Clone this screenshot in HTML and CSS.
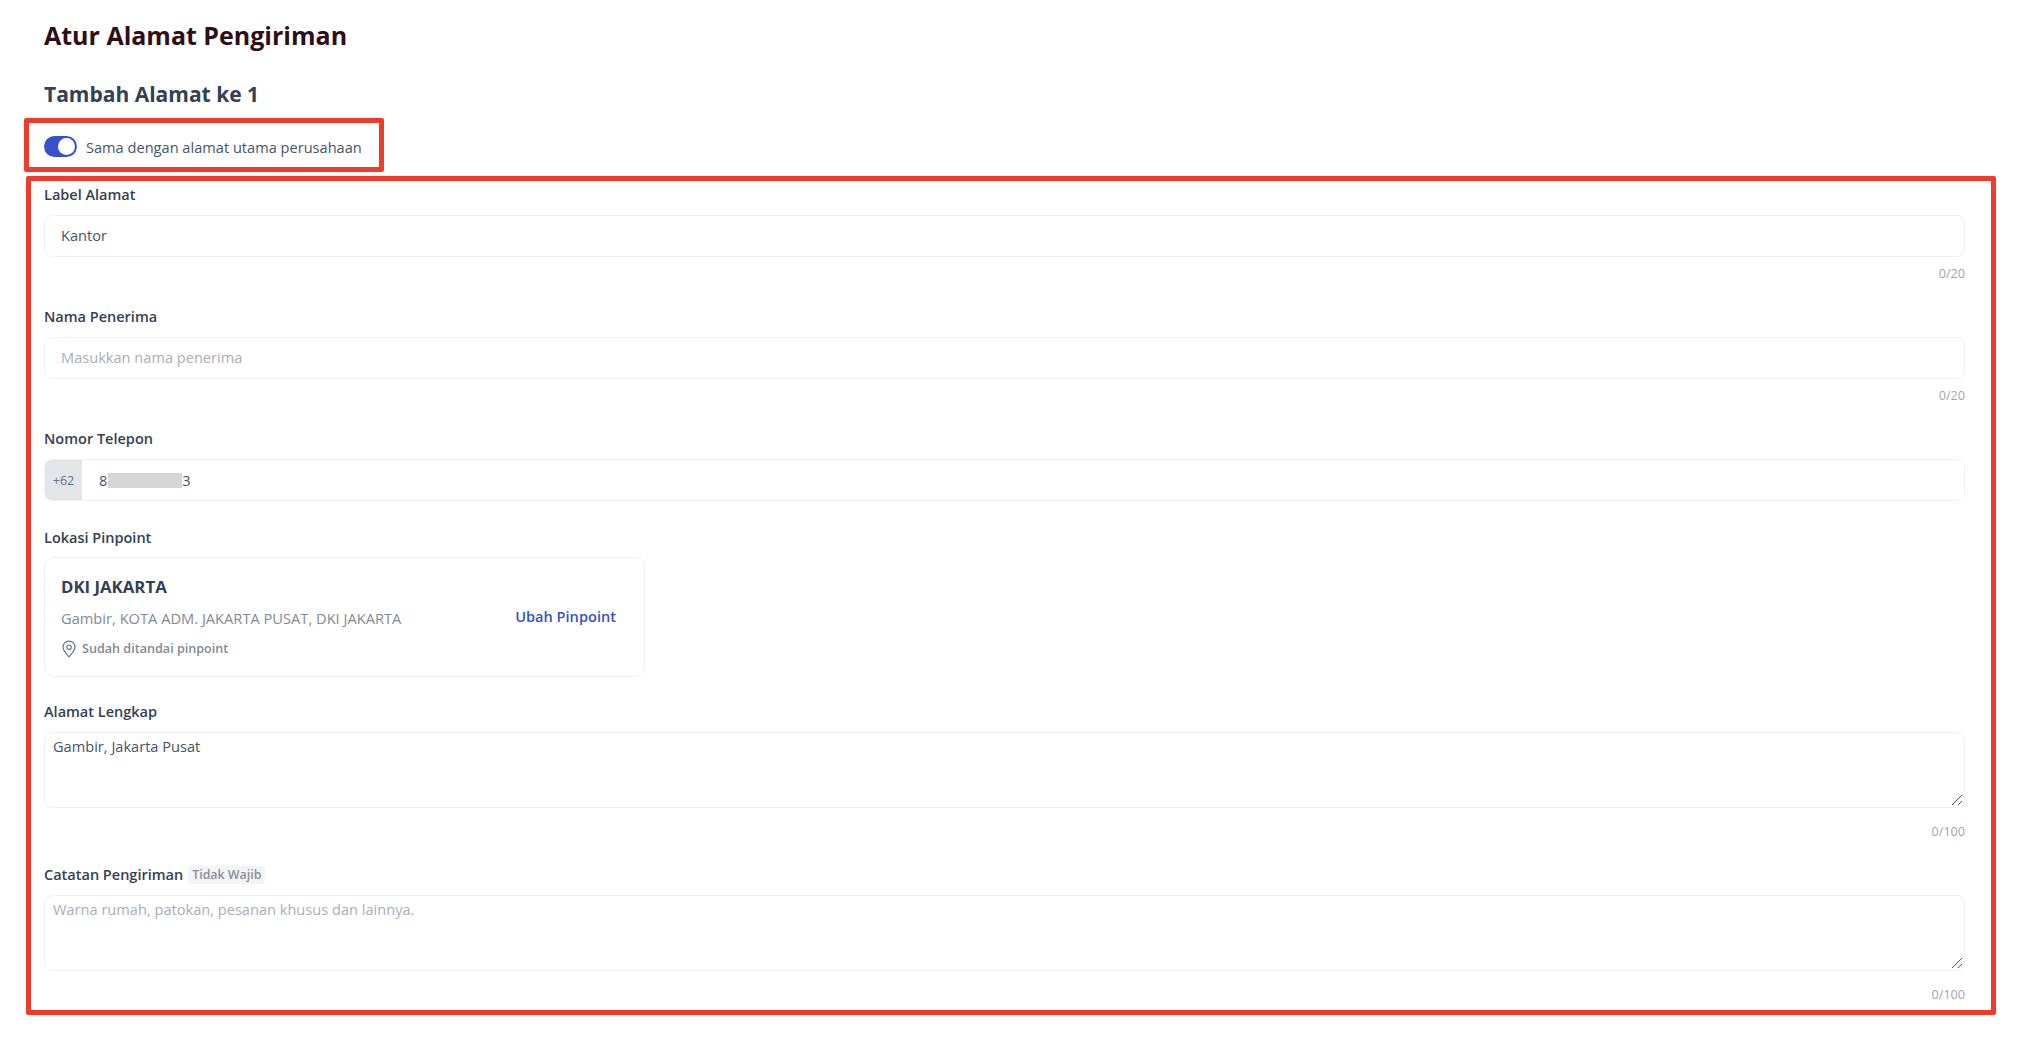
FILE: index.html
```html
<!DOCTYPE html>
<html lang="id">
<head>
<meta charset="utf-8">
<title>Atur Alamat Pengiriman</title>
<link rel="stylesheet" href="styles.css">
</head>
<body>
<main class="page">
  <h1 class="title">Atur Alamat Pengiriman</h1>
  <h2 class="subtitle">Tambah Alamat ke 1</h2>
  <section class="mark mark-toggle">
    <span class="toggle"><span class="knob"></span></span>
    <span class="toggle-text">Sama dengan alamat utama perusahaan</span>
  </section>
  <section class="mark mark-form">
    <div class="field">
      <div class="label">Label Alamat</div>
      <div class="input">Kantor</div>
      <div class="count">0/20</div>
    </div>
    <div class="field">
      <div class="label">Nama Penerima</div>
      <div class="input placeholder">Masukkan nama penerima</div>
      <div class="count">0/20</div>
    </div>
    <div class="field field-phone">
      <div class="label">Nomor Telepon</div>
      <div class="input phone">
        <span class="prefix">+62</span>
        <span class="phone-value">8<span class="redact"></span>3</span>
      </div>
    </div>
    <div class="field field-pin">
      <div class="label label-pin">Lokasi Pinpoint</div>
      <div class="card">
        <div class="card-info">
          <div class="province">DKI JAKARTA</div>
          <div class="address">Gambir, KOTA ADM. JAKARTA PUSAT, DKI JAKARTA</div>
          <div class="pinned">
            <svg class="pin" viewBox="0 0 16 18" width="16" height="18" aria-hidden="true"><path d="M8 1.2c-3.4 0-6 2.6-6 5.900 0 3.900 3.600 7 6 9.600 2.400-2.600 6-5.700 6-9.600 0-3.300-2.600-5.900-6-5.900z" fill="none" stroke="#667085" stroke-width="1.200"/><circle cx="8" cy="7.200" r="2.200" fill="none" stroke="#667085" stroke-width="1.200"/></svg>
            <span>Sudah ditandai pinpoint</span>
          </div>
        </div>
        <a class="change">Ubah Pinpoint</a>
      </div>
    </div>
    <div class="field">
      <div class="label">Alamat Lengkap</div>
      <div class="area">Gambir, Jakarta Pusat<svg class="grip" viewBox="0 0 12 12" width="12" height="12" aria-hidden="true"><path d="M1 11 11 1M7 11l4-4" stroke="#555" stroke-width="1" fill="none"/></svg></div>
      <div class="count">0/100</div>
    </div>
    <div class="field">
      <div class="label label-row">Catatan Pengiriman <span class="tag">Tidak Wajib</span></div>
      <div class="area placeholder">Warna rumah, patokan, pesanan khusus dan lainnya.<svg class="grip" viewBox="0 0 12 12" width="12" height="12" aria-hidden="true"><path d="M1 11 11 1M7 11l4-4" stroke="#555" stroke-width="1" fill="none"/></svg></div>
      <div class="count">0/100</div>
    </div>
  </section>
</main>
</body>
</html>
```

FILE: styles.css
```css
* { box-sizing: border-box; }
html, body { margin: 0; padding: 0; background: #fff; }
body { font-family: "Open Sans", "Noto Sans", sans-serif; color: #344054; overflow: hidden; }
.page { width: 2022px; height: 1038px; padding-top: 18px; }
.title { margin: 0 0 0 44px; font-size: 25px; line-height: 34px; font-weight: 700; color: #2d0f18; }
.subtitle { margin: 28px 0 0 44px; font-size: 21px; line-height: 28px; font-weight: 700; color: #344054; }
.mark { border: 5px solid #f03a2a; border-radius: 2px; }
.mark-toggle { margin: 10px 0 0 24px; width: 360px; height: 54px; padding: 3px 0 0 15px; display: flex; align-items: center; gap: 9px; }
.toggle { width: 33px; height: 21px; border-radius: 11px; background: #3651c9; display: flex; align-items: center; justify-content: flex-end; padding-right: 2px; }
.knob { width: 17px; height: 17px; border-radius: 50%; background: #fff; }
.toggle-text { font-size: 14.6px; line-height: 20px; color: #475467; }
.mark-form { margin: 4px 0 0 26px; width: 1970px; height: 839px; padding: 4px 26px 0 13px; }
.field { display: flex; flex-direction: column; margin-bottom: 25px; }
.field-phone { margin-bottom: 27px; }
.field-pin { margin-bottom: 25px; }
.label { font-size: 14.5px; line-height: 20px; font-weight: 600; color: #344054; margin-bottom: 10px; }
.label-pin { margin-bottom: 9px; }
.input { height: 42px; border: 1px solid #f0f1f3; border-radius: 8px; padding: 0 16px 2px; display: flex; align-items: center; font-size: 14.6px; color: #475467; }
.placeholder { color: #a9aeb8; }
.count { margin-top: 8px; margin-bottom: -1px; height: 18px; font-size: 12.6px; line-height: 18px; text-align: right; color: #a0a5b1; }
.phone { padding: 0; overflow: hidden; }
.prefix { width: 37px; height: 100%; background: #e4e5e9; display: flex; align-items: center; justify-content: center; font-size: 12.6px; color: #667085; }
.phone-value { margin-left: 17px; display: flex; align-items: center; }
.redact { width: 74px; height: 15px; background: #d6d6d6; margin-left: 1px; }
.card { width: 601px; height: 120px; border: 1px solid #eff0f2; border-radius: 10px; padding: 18px 28px 0 16px; display: flex; justify-content: space-between; align-items: flex-start; }
.province { font-size: 16.8px; line-height: 22px; font-weight: 700; color: #344054; }
.address { margin-top: 10px; font-size: 14.67px; line-height: 20px; color: #838995; }
.pinned { margin-top: 12px; display: flex; align-items: center; gap: 5px; font-size: 12.6px; line-height: 18px; font-weight: 600; color: #838995; }
.pin { flex: none; }
.change { margin-top: 30px; font-size: 14.6px; line-height: 20px; font-weight: 600; color: #3651c9; }
.area { position: relative; height: 76px; border: 1px solid #f0f1f3; border-radius: 8px; padding: 1px 8px; font-size: 14.6px; line-height: 24px; color: #475467; }
.area.placeholder { color: #a9aeb8; }
.grip { position: absolute; right: 1px; bottom: 1px; }
.field .area + .count { margin-top: 15px; }
.label-row { display: flex; align-items: center; gap: 5px; }
.tag { padding: 0 4px; height: 18px; line-height: 18px; border-radius: 4px; background: #f3f4f7; font-size: 12.4px; font-weight: 600; color: #8a909c; }
```
